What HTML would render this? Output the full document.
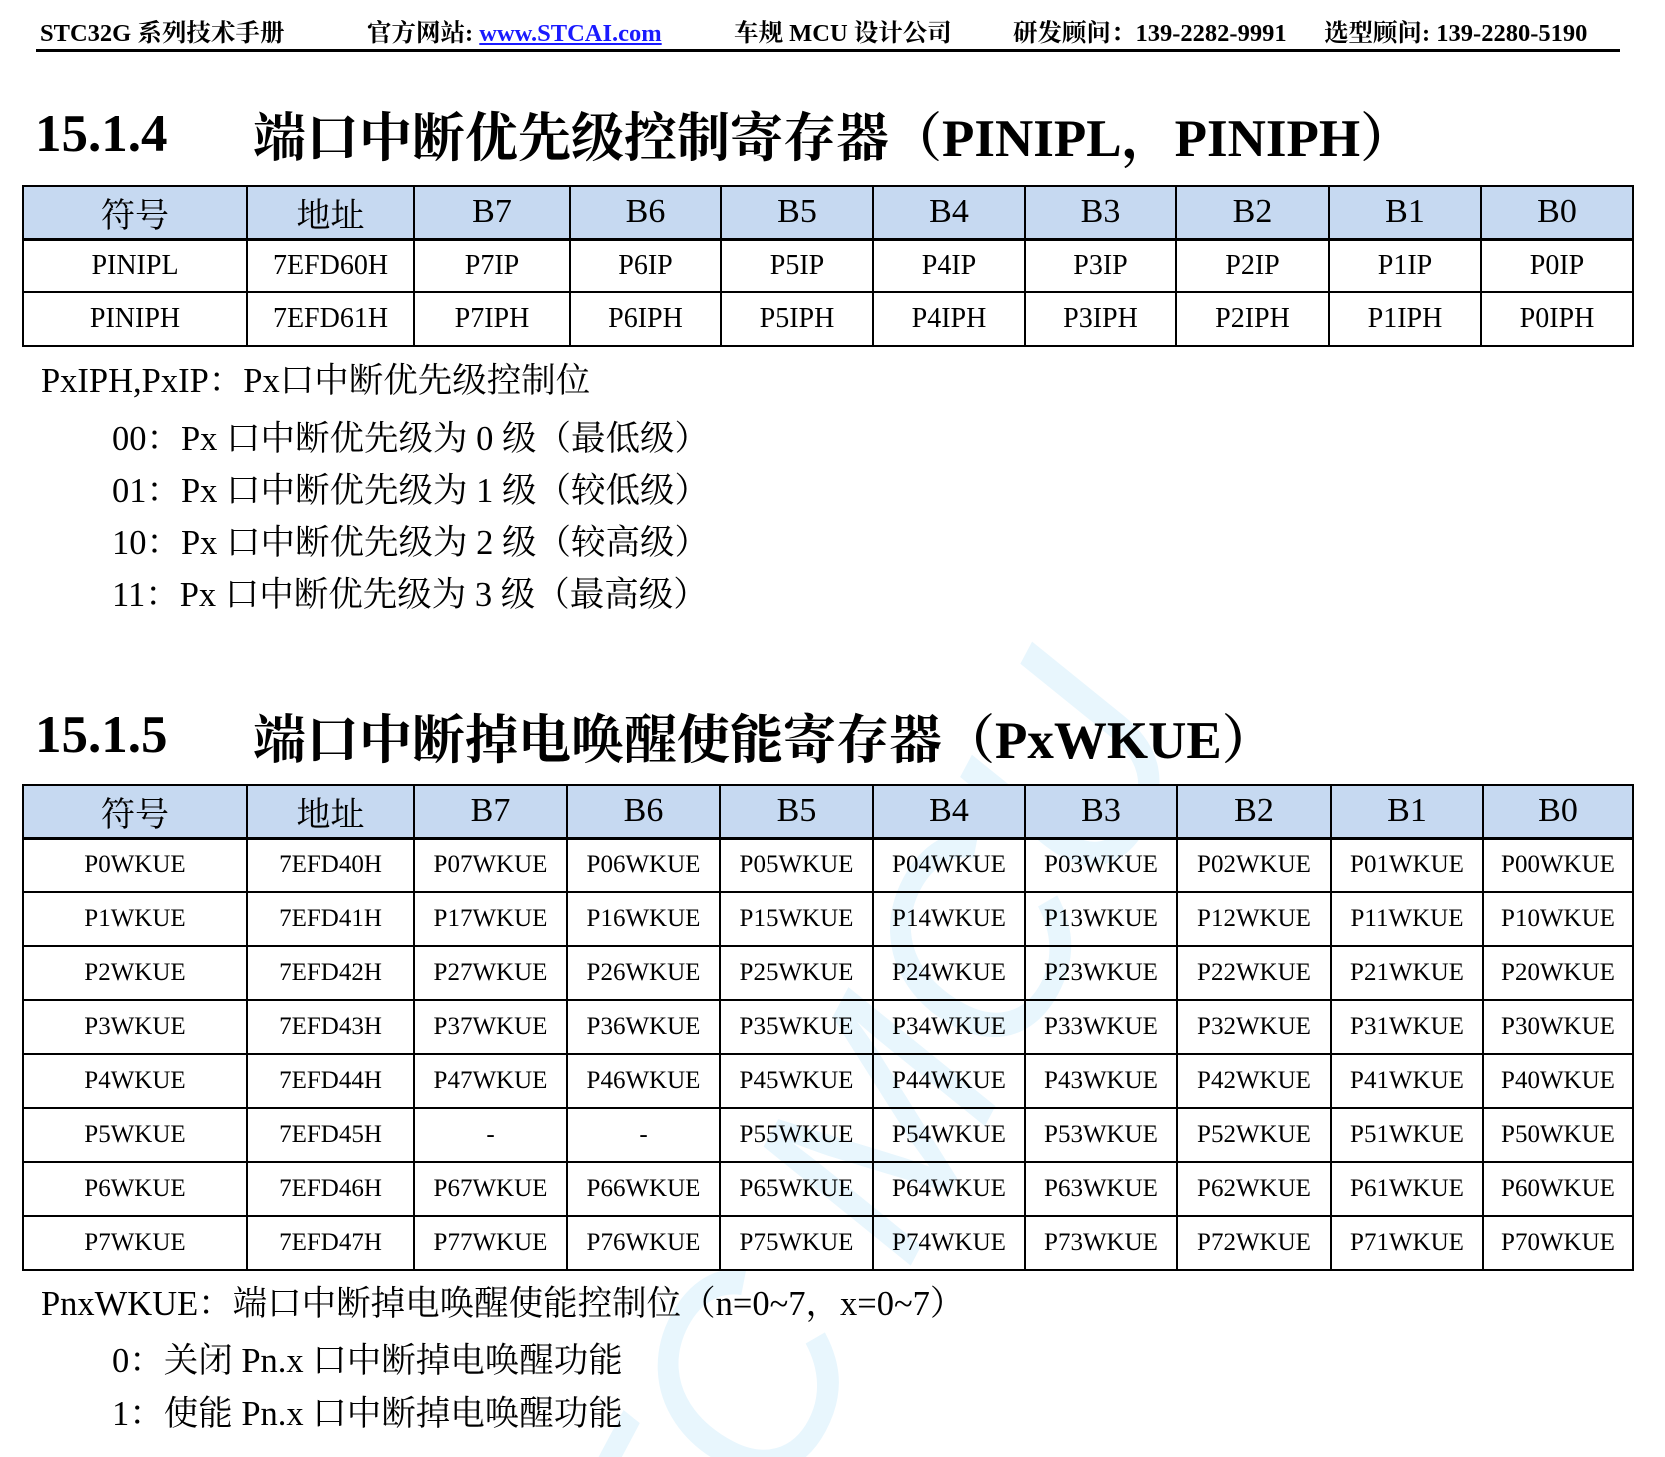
<!DOCTYPE html>
<html style="overflow:hidden"><head><meta charset="utf-8"><style>
body{margin:0;width:1665px;height:1457px;background:#fff;position:relative;overflow:hidden;font-family:"Liberation Serif","Noto Serif CJK SC",serif;color:#000}
.a{position:absolute;white-space:nowrap}
.hd{top:14px;font-size:24.5px;font-weight:bold}
table{position:absolute;left:22px;width:1610px;border-collapse:collapse;table-layout:fixed}
td{border:2px solid #000;text-align:center;padding:0;white-space:nowrap}
tr.h td{background:#c6d9f1;font-size:34px;border-bottom:3px solid #000}
.t{font-size:53px;font-weight:bold}
.p{font-size:34.5px}
</style></head><body>
<div class="a" style="left:0;top:0;width:1665px;height:1457px;overflow:hidden;pointer-events:none">
<div class="a" style="left:400px;top:1700px;font-size:270px;color:#e8f6fd;transform:rotate(-62deg);transform-origin:left top;font-family:'Liberation Sans',sans-serif;font-style:italic">STC MCU</div></div>
<div class="a hd" style="left:40px">STC32G 系列技术手册</div>
<div class="a hd" style="left:367px">官方网站: <span style="color:#1a1aff;text-decoration:underline">www.STCAI.com</span></div>
<div class="a hd" style="left:734px">车规 MCU 设计公司</div>
<div class="a hd" style="left:1013px">研发顾问：139-2282-9991</div>
<div class="a hd" style="left:1324px">选型顾问: 139-2280-5190</div>
<div class="a" style="left:36px;top:49px;width:1584px;height:3px;background:#000"></div>

<div class="a t" style="left:35px;top:104px">15.1.4</div>
<div class="a t" style="left:253px;top:96px">端口中断优先级控制寄存器（PINIPL，PINIPH）</div>
<table style="top:185px">
<colgroup><col style="width:224px"><col style="width:167px"><col style="width:156px"><col style="width:151px"><col style="width:152px"><col style="width:152px"><col style="width:151px"><col style="width:153px"><col style="width:152px"><col style="width:152px"></colgroup>
<tr class="h" style="height:53px"><td>符号</td><td>地址</td><td>B7</td><td>B6</td><td>B5</td><td>B4</td><td>B3</td><td>B2</td><td>B1</td><td>B0</td></tr>
<tr style="height:53px;font-size:28px"><td>PINIPL</td><td>7EFD60H</td><td>P7IP</td><td>P6IP</td><td>P5IP</td><td>P4IP</td><td>P3IP</td><td>P2IP</td><td>P1IP</td><td>P0IP</td></tr>
<tr style="height:54px;font-size:28px"><td>PINIPH</td><td>7EFD61H</td><td>P7IPH</td><td>P6IPH</td><td>P5IPH</td><td>P4IPH</td><td>P3IPH</td><td>P2IPH</td><td>P1IPH</td><td>P0IPH</td></tr>
</table>
<div class="a p" style="left:41px;top:352px">PxIPH,PxIP：Px口中断优先级控制位</div>
<div class="a p" style="left:112px;top:410px">00：Px 口中断优先级为 0 级（最低级）</div>
<div class="a p" style="left:112px;top:462px">01：Px 口中断优先级为 1 级（较低级）</div>
<div class="a p" style="left:112px;top:514px">10：Px 口中断优先级为 2 级（较高级）</div>
<div class="a p" style="left:112px;top:566px">11：Px 口中断优先级为 3 级（最高级）</div>

<div class="a t" style="left:35px;top:705px">15.1.5</div>
<div class="a t" style="left:253px;top:698px">端口中断掉电唤醒使能寄存器（PxWKUE）</div>
<table style="top:784px">
<colgroup><col style="width:224px"><col style="width:167px"><col style="width:153px"><col style="width:153px"><col style="width:153px"><col style="width:152px"><col style="width:152px"><col style="width:154px"><col style="width:152px"><col style="width:150px"></colgroup>
<tr class="h" style="height:53px"><td>符号</td><td>地址</td><td>B7</td><td>B6</td><td>B5</td><td>B4</td><td>B3</td><td>B2</td><td>B1</td><td>B0</td></tr>
<tbody style="font-size:25px">
<tr style="height:54px"><td>P0WKUE</td><td>7EFD40H</td><td>P07WKUE</td><td>P06WKUE</td><td>P05WKUE</td><td>P04WKUE</td><td>P03WKUE</td><td>P02WKUE</td><td>P01WKUE</td><td>P00WKUE</td></tr>
<tr style="height:54px"><td>P1WKUE</td><td>7EFD41H</td><td>P17WKUE</td><td>P16WKUE</td><td>P15WKUE</td><td>P14WKUE</td><td>P13WKUE</td><td>P12WKUE</td><td>P11WKUE</td><td>P10WKUE</td></tr>
<tr style="height:54px"><td>P2WKUE</td><td>7EFD42H</td><td>P27WKUE</td><td>P26WKUE</td><td>P25WKUE</td><td>P24WKUE</td><td>P23WKUE</td><td>P22WKUE</td><td>P21WKUE</td><td>P20WKUE</td></tr>
<tr style="height:54px"><td>P3WKUE</td><td>7EFD43H</td><td>P37WKUE</td><td>P36WKUE</td><td>P35WKUE</td><td>P34WKUE</td><td>P33WKUE</td><td>P32WKUE</td><td>P31WKUE</td><td>P30WKUE</td></tr>
<tr style="height:54px"><td>P4WKUE</td><td>7EFD44H</td><td>P47WKUE</td><td>P46WKUE</td><td>P45WKUE</td><td>P44WKUE</td><td>P43WKUE</td><td>P42WKUE</td><td>P41WKUE</td><td>P40WKUE</td></tr>
<tr style="height:54px"><td>P5WKUE</td><td>7EFD45H</td><td>-</td><td>-</td><td>P55WKUE</td><td>P54WKUE</td><td>P53WKUE</td><td>P52WKUE</td><td>P51WKUE</td><td>P50WKUE</td></tr>
<tr style="height:54px"><td>P6WKUE</td><td>7EFD46H</td><td>P67WKUE</td><td>P66WKUE</td><td>P65WKUE</td><td>P64WKUE</td><td>P63WKUE</td><td>P62WKUE</td><td>P61WKUE</td><td>P60WKUE</td></tr>
<tr style="height:54px"><td>P7WKUE</td><td>7EFD47H</td><td>P77WKUE</td><td>P76WKUE</td><td>P75WKUE</td><td>P74WKUE</td><td>P73WKUE</td><td>P72WKUE</td><td>P71WKUE</td><td>P70WKUE</td></tr>
</tbody></table>
<div class="a p" style="left:41px;top:1275px">PnxWKUE：端口中断掉电唤醒使能控制位（n=0~7，x=0~7）</div>
<div class="a p" style="left:112px;top:1332px">0：关闭 Pn.x 口中断掉电唤醒功能</div>
<div class="a p" style="left:112px;top:1385px">1：使能 Pn.x 口中断掉电唤醒功能</div>
</body></html>
